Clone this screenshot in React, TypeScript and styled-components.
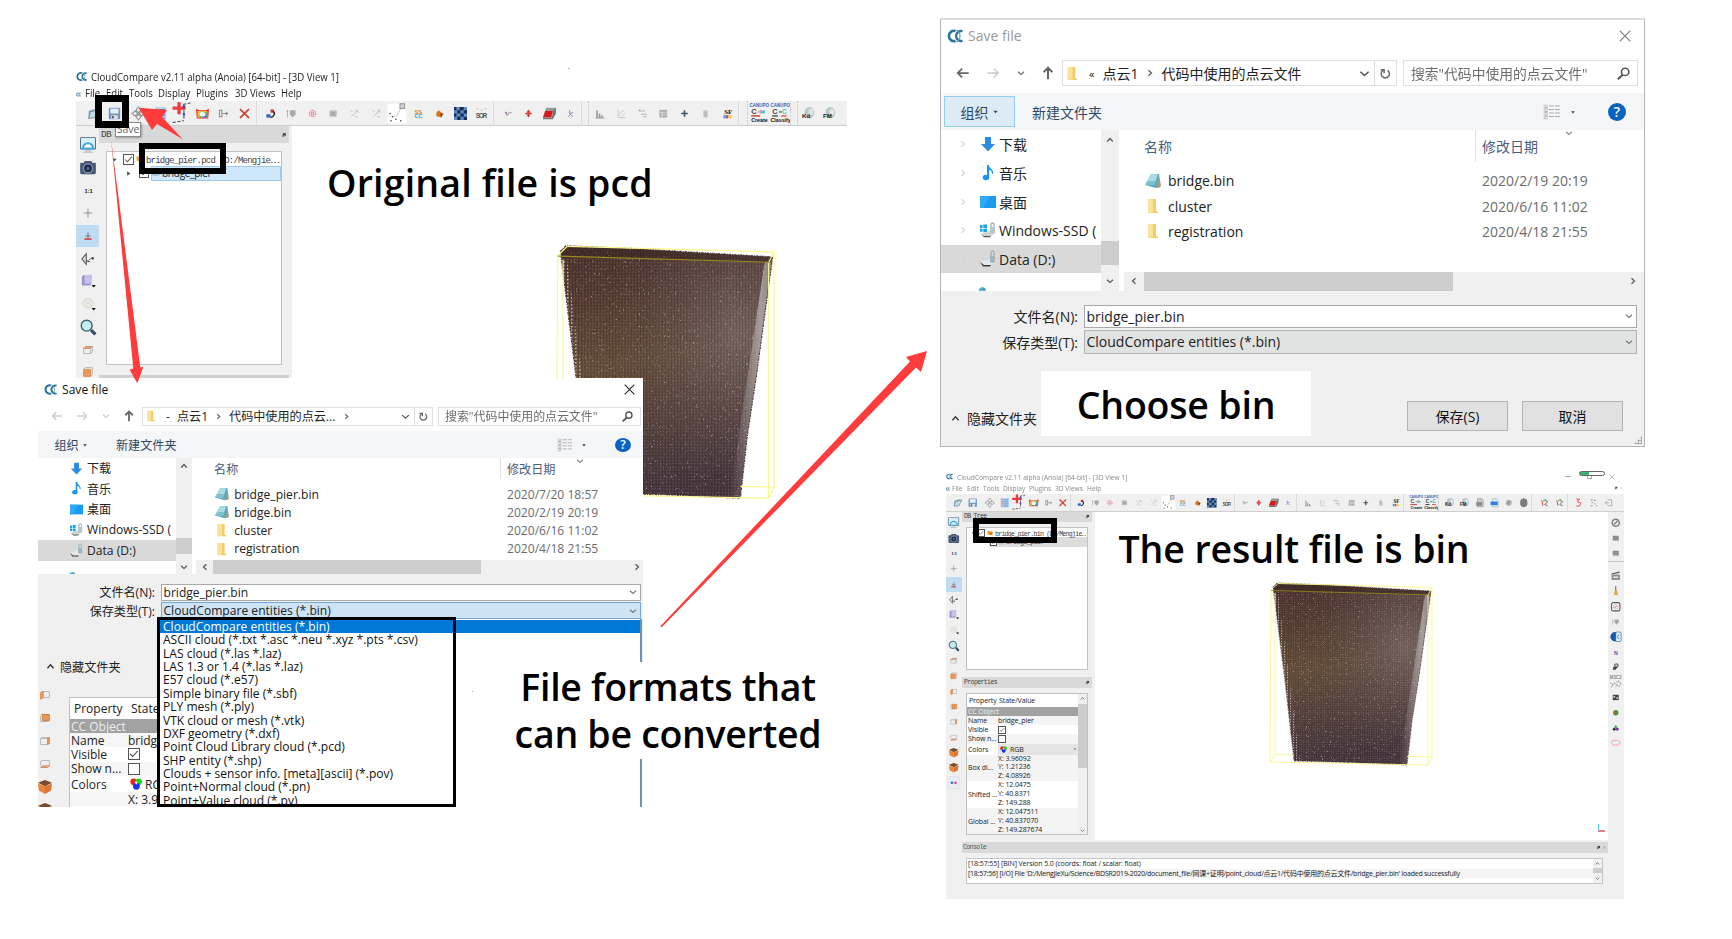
import React, { useId } from "react";
import styled, { createGlobalStyle, css, ThemeProvider } from "styled-components";

const UI = `"Open Sans", "Noto Sans CJK SC", sans-serif`;
const FIXED = `"Liberation Mono", "Noto Sans CJK SC", monospace`;

const GlobalStyle = createGlobalStyle`
  * { box-sizing: border-box; }
  body { margin: 0; background: #fff; font-family: ${UI}; color: #000; }
`;

/* ---------------------------------------------------------------- canvas */

const Board = styled.main`
  position: relative;
  width: 1732px;
  height: 939px;
  overflow: hidden;
  background: #fff;
`;

type Place = { $x: number; $y: number; $w?: number; $h?: number };

const placed = css<Place>`
  position: absolute;
  left: ${(p) => p.$x}px;
  top: ${(p) => p.$y}px;
  ${(p) => p.$w !== undefined && `width: ${p.$w}px;`}
  ${(p) => p.$h !== undefined && `height: ${p.$h}px;`}
`;

const Item = styled.section<Place>`
  ${placed}
  overflow: hidden;
`;

const Frame = styled.div<Place & { $b: number }>`
  ${placed}
  border: ${(p) => p.$b}px solid #000;
`;

const Caption = styled.div<Place & { $ls?: number }>`
  ${placed}
  display: flex;
  align-items: center;
  justify-content: center;
  text-align: center;
  white-space: pre;
  background: #fff;
  font-size: 37.5px;
  line-height: 47px;
  font-weight: 560;
  letter-spacing: ${(p) => p.$ls ?? 0}px;
`;

const ChooseBox = styled(Caption)`
  padding-top: 2px;
`;

const Speck = styled.i<Place>`
  ${placed}
  background: #b5b5b5;
`;

const Overlay = styled.svg`
  position: absolute;
  inset: 0;
  pointer-events: none;
`;

const Squeeze = styled.span<{ $k: number }>`
  display: inline-block;
  white-space: nowrap;
  transform: scaleX(${(p) => p.$k});
  transform-origin: left center;
`;

/* ----------------------------------------------------------------- icons */

const Svg = styled.svg<{ $s: number }>`
  flex: none;
  width: ${(p) => p.$s}px;
  height: ${(p) => p.$s}px;
  overflow: visible;
`;

const tinyText = { fontFamily: "Liberation Sans", fontWeight: 700 } as const;

const drawings: Record<string, React.ReactNode> = {
  logo: (
    <g fill="none" stroke="#2f7396">
      <path d="M8.500 3A5.200 5.200 0 1 0 8.500 13" strokeWidth="2.600" />
      <path d="M15.500 3.200A5 5 0 1 0 15.500 12.800" strokeWidth="2.400" />
      <path d="M9 2a6.500 6.500 0 0 1 0 12" stroke="#5aa3c4" strokeWidth="1.200" />
    </g>
  ),
  open: (
    <g>
      <path d="M2 5l5-2 6-1-3 10-8 2z" fill="#8ba9ba" />
      <path d="M4 6l11-3-5 10-8 1z" fill="#c2dce8" stroke="#5c7b8b" />
    </g>
  ),
  save: (
    <g>
      <rect x="1" y="1" width="14" height="14" rx="1.5" fill="#7295c0" />
      <rect x="3" y="2" width="10" height="6" fill="#e5f0fa" />
      <rect x="4" y="10" width="8" height="5" fill="#d8dee4" />
      <rect x="5" y="11" width="2" height="3" fill="#456" />
    </g>
  ),
  pick: (
    <g fill="none" stroke="#949494" strokeWidth="1.3">
      <path d="M8 0l3 4-3 3-3-3zM8 16l3-4-3-3-3 3zM0 8l4-3 3 3-3 3zM16 8l-4-3-3 3 3 3z" />
    </g>
  ),
  list: (
    <g>
      <rect x="1" y="0" width="14" height="16" fill="#b9d7f3" />
      <g stroke="#4c7fc0" strokeWidth="1.3">
        <path d="M6 3h8M6 6.500h8M6 10h8M6 13.500h8" />
      </g>
      <g fill="#dc6045">
        <path d="M2.500 2h2v2h-2zM2.500 5.500h2v2h-2zM2.500 9h2v2h-2zM2.500 12.500h2v2h-2z" />
      </g>
    </g>
  ),
  align: (
    <g>
      <path d="M5-6v15M-3 1.500h16" stroke="#ee3b3b" strokeWidth="4" />
      <path d="M-3 19l14-2M11-2v18M10-3l9-2" stroke="#444" strokeDasharray="4 2" strokeWidth="1.3" fill="none" />
      <circle cx="11" cy="-1" r="1.500" fill="#3d47c5" />
      <circle cx="11" cy="9" r="1.500" fill="#3d47c5" />
    </g>
  ),
  colors: (
    <g>
      <path d="M0 2l4 2h8l4-2-1 12H1z" fill="#e33" />
      <path d="M2 5h12v8H2z" fill="#f8c42e" />
      <path d="M4 6h9v6H4z" fill="#47c558" />
      <path d="M6 8h7v5H6z" fill="#2e76e6" />
      <path d="M4 7l3-1 4 1 1 3-3 2-4-1z" fill="#fff" />
    </g>
  ),
  export: (
    <g fill="none" stroke="#8c8c8c" strokeWidth="1.300">
      <path d="M3 4h3v8H3zM7 8h6M11 6l2 2-2 2" />
    </g>
  ),
  remove: <path d="M2.500 2.500l11 11M13.500 2.500l-11 11" stroke="#cf4535" strokeWidth="2.200" />,
  merge: (
    <g>
      <path d="M3 9h5v4H3z" fill="#2a5fd0" />
      <path d="M8 3h4v4H8z" fill="#e13030" />
      <path d="M11 5c3 2 2 7-3 8" fill="none" stroke="#333" strokeWidth="2" />
    </g>
  ),
  shield: (
    <g fill="#a8a8a8">
      <path d="M6 4h7v5l-3.500 4L6 9z" />
      <path d="M2.500 6h1v7h-1zM1.500 6L3 3.500 4.500 6z" />
    </g>
  ),
  flower: (
    <g fill="none" stroke="#df8290" strokeWidth="1.300">
      <circle cx="8" cy="8" r="4" strokeDasharray="2 1" />
      <circle cx="8" cy="8" r="1.800" />
    </g>
  ),
  grayBox: (
    <g>
      <rect x="3" y="4" width="9" height="8" rx="1" fill="#bdbdbd" />
      <path d="M5 7h5M5 9.500h5" stroke="#929292" />
    </g>
  ),
  diag: (
    <g stroke="#c2c2c2" fill="none" strokeWidth="1.200">
      <path d="M4 12l7-7M9 4h3v3M3 4l3 2M9 12h3" />
    </g>
  ),
  segment: (
    <g>
      <rect x="-4" y="-4" width="23" height="24" fill="#fff" />
      <path d="M6 12l7-12" stroke="#9a9a9a" strokeDasharray="2 1" />
      <rect x="11" y="-4" width="6" height="6" fill="#d0d0d0" stroke="#888" />
      <g fill="#444">
        <circle cx="-1" cy="8" r="1" />
        <circle cx="2" cy="12" r="1" />
        <circle cx="6" cy="15" r="1" />
        <circle cx="0" cy="17" r="1" />
        <circle cx="12" cy="17" r="1" />
      </g>
    </g>
  ),
  cc: (
    <g fontSize="7" style={tinyText}>
      <text x="3" y="8" fill="#dd7b3a">SS</text>
      <text x="3" y="13.500" fill="#38a3c9">CC</text>
    </g>
  ),
  orange: (
    <g>
      <path d="M4 11V7l3-3 5 4-2 5z" fill="#d8761e" />
      <path d="M9 8l4 0-3 5z" fill="#7c3c10" />
    </g>
  ),
  check: (
    <g>
      <rect x="0" y="0" width="16" height="16" fill="#1b2d4c" />
      <path d="M3 0h4v4H3zM12 0h4v4h-4zM0 4h4v4H0zM8 4h4v4H8zM3 8h5v4H3zM12 8h4v4h-4zM0 12h4v4H0zM8 12h4v4H8z" fill="#5f8cc8" />
    </g>
  ),
  sor: (
    <g>
      <g fill="#e0a08a">
        <circle cx="3" cy="2" r=".9" />
        <circle cx="8" cy="4" r=".9" />
        <circle cx="13" cy="2" r=".9" />
      </g>
      <text x="1" y="13.500" fontSize="8" textLength="14" fill="#555" style={tinyText}>SOR</text>
    </g>
  ),
  curve: (
    <g>
      <path d="M5 6l2.500 4.500L10 7h3" fill="none" stroke="#888" strokeWidth="1.100" />
      <circle cx="6.500" cy="7" r="1.100" fill="#b55ab5" />
    </g>
  ),
  move: (
    <g fill="#d83434">
      <path d="M7.300 4h1.400v8H7.300zM4 7.300h8v1.400H4z" />
      <path d="M8 3l3 4H5zM8 13l3-4H5z" opacity=".8" />
    </g>
  ),
  slab: (
    <g>
      <path d="M4 1h12l-3 11H0z" fill="#999" />
      <path d="M3 5h9l-2 8H0z" fill="#dc1717" />
      <path d="M13 4l3-3v7l-4 7H0v-2h11z" fill="#777" />
    </g>
  ),
  axes: (
    <g fill="none" stroke="#7a74c8" strokeWidth="1.100">
      <path d="M7 4v4l4 4M7 8l4-1" />
      <path d="M5 12l3-3" stroke="#888" />
    </g>
  ),
  bars: (
    <g fill="#9b9b9b">
      <path d="M4 4h2v9H4zM7 8h2v5H7zM10 10h2v3h-2zM3 13h11v1H3z" />
    </g>
  ),
  angle: <path d="M4 3v10h9M5 9l6-5M9 11l3-3" fill="none" stroke="#c8c8c8" strokeWidth="1.200" />,
  swap: (
    <g fill="none" stroke="#b0b0b0" strokeWidth="1.300">
      <path d="M3 5h8M6 9h7M3 5l2-2M9 12h4" />
    </g>
  ),
  table: (
    <g>
      <rect x="3" y="3.500" width="9.500" height="9.500" fill="#acacac" />
      <path d="M3 6.500h9.500M6 6v7M6 9.500h6.500" stroke="#eee" strokeWidth=".8" />
    </g>
  ),
  plus: <path d="M8 4v8M4 8h8" stroke="#3e5463" strokeWidth="2" />,
  trash: (
    <g>
      <rect x="5.500" y="4" width="5" height="9" fill="#c5c5c5" />
      <path d="M5.500 7h5M5.500 10h5" stroke="#b0b0b0" />
    </g>
  ),
  sf: (
    <g>
      <text x="4" y="8" fontSize="8.500" fill="#222" style={{ ...tinyText, fontFamily: "Liberation Serif" }}>SF</text>
      <path d="M3 10h3v4H3z" fill="#26b5e0" />
      <path d="M6 10h3v4H6z" fill="#e635b4" />
      <path d="M9 10h4v4H9z" fill="#f0d32a" />
    </g>
  ),
  canupo1: (
    <g style={tinyText}>
      <text x="-3" y="0" fontSize="5.500" fill="#3a62bb">CANUPO</text>
      <text x="-1" y="9" fontSize="9" fill="#444">C</text>
      <path d="M7 6h4M10 4l3 2-3 2" stroke="#d44" fill="none" />
      <path d="M-1 11h11" stroke="#c55" strokeWidth="2" />
      <circle cx="14" cy="6" r="2" fill="#3cc2d8" />
      <text x="-1" y="18" fontSize="6.500" fill="#111">Create</text>
    </g>
  ),
  canupo2: (
    <g style={tinyText}>
      <text x="-3" y="0" fontSize="5.500" fill="#3a62bb">CANUPO</text>
      <text x="-1" y="9" fontSize="9" fill="#444">C</text>
      <path d="M7 6h4" stroke="#4a4" strokeWidth="2" />
      <text x="11" y="9" fontSize="8" fill="#3cc2d8">C</text>
      <path d="M-1 11h7" stroke="#333" strokeWidth="1.500" />
      <path d="M10 11h7" stroke="#d44" strokeWidth="1.500" />
      <text x="-3" y="18" fontSize="6.500" fill="#111">Classify</text>
    </g>
  ),
  kd: (
    <g>
      <ellipse cx="9" cy="7" rx="6" ry="7" fill="#b9c5c8" />
      <ellipse cx="11" cy="6" rx="3" ry="4" fill="#dfe7e8" />
      <text x="0" y="14" fontSize="7.500" fill="#222" style={tinyText}>Kd</text>
    </g>
  ),
  fm: (
    <g>
      <ellipse cx="9" cy="7" rx="6" ry="7" fill="#b9c5c8" />
      <ellipse cx="11" cy="6" rx="3" ry="4" fill="#dfe7e8" />
      <text x="0" y="14" fontSize="7.500" fill="#222" style={tinyText}>FM</text>
    </g>
  ),
  csv: (
    <g>
      <path d="M4 1h7l3 3v11H4z" fill="#c8c8c8" stroke="#999" />
      <path d="M2 7h10v6H2z" fill="#8b8b8b" />
    </g>
  ),
  blueDoc: (
    <g>
      <path d="M4 1h7l3 3v11H4z" fill="#dce8f6" stroke="#9bb4d0" />
      <path d="M1 6h12v6H1z" fill="#2f7fe0" />
    </g>
  ),
  ball: (
    <g>
      <circle cx="8" cy="8" r="5" fill="#b4b4b4" />
      <path d="M4 10l8-4M8 3v10" stroke="#888" />
    </g>
  ),
  globe: (
    <g>
      <ellipse cx="8" cy="8" rx="6.500" ry="7.500" fill="#8d8d8d" />
      <path d="M8 1v14M4 3q3 5 0 10M12 3q-3 5 0 10" stroke="#555" fill="none" />
    </g>
  ),
  rgb: (
    <g>
      <path d="M3 4l2 9" stroke="#d33" strokeWidth="1.500" />
      <path d="M8 4l5 2-5 5 5 2" stroke="#666" strokeWidth="1.500" fill="none" />
      <path d="M5 5l5-3" stroke="#4a4" strokeWidth="1.500" />
    </g>
  ),
  redCurve: <path d="M4 2h6l-5 4 6 2-1 5-6 1" fill="none" stroke="#e55058" strokeWidth="1.600" />,
  dots: (
    <g fill="#999">
      <path d="M3 2h3v2H3zM8 3h3v2H8zM4 7h3v2H4zM3 12h3v2H3zM9 9h2v2H9zM12 12h2v2h-2z" />
    </g>
  ),
  exit: <path d="M6 3h7v10H6M2 8h7M5 5L2 8l3 3" fill="none" stroke="#aaa" strokeWidth="1.500" />,
  screen: (
    <g>
      <rect x="-1" y="-1" width="18" height="14" rx="1" fill="#3d6078" />
      <rect x="0" y="0" width="16" height="12" fill="#d7effb" />
      <path d="M2 12a6 6 0 0 1 12 0z" fill="#fff" stroke="#4aa8de" strokeWidth="2.400" />
      <path d="M5 14h6l3 3H2z" fill="#c5c9cb" />
    </g>
  ),
  camera: (
    <g>
      <rect x="-1" y="2" width="18" height="13" rx="1.500" fill="#4c5b78" />
      <path d="M4 0h8l1 3H3z" fill="#4c5b78" />
      <circle cx="8" cy="8.500" r="5" fill="#1c2740" stroke="#8f9db5" strokeWidth="1.200" />
      <circle cx="8" cy="8.500" r="2" fill="#4a6395" />
    </g>
  ),
  one: <text x="4" y="10.500" fontSize="6.500" fill="#222" style={tinyText}>1:1</text>,
  cross: <path d="M8 3v10M3 8h10" stroke="#999" strokeWidth="1.300" />,
  pivot: (
    <g>
      <path d="M8 4v7M5 8h6" stroke="#777" strokeWidth="1.200" />
      <path d="M4 11.500h8" stroke="#de4448" strokeWidth="2" />
    </g>
  ),
  view: (
    <g>
      <path d="M6 2v12L1 8z" fill="#ddd" stroke="#555" strokeWidth="1.200" />
      <path d="M6 10l4 1" stroke="#444" strokeWidth="1.200" />
      <path d="M9 9l3-2" stroke="#666" />
      <path d="M12 6h2.500v2.500H12z" fill="#333" />
    </g>
  ),
  cube: (
    <g>
      <path d="M1 3l2-2h9v10l-2 2H1z" fill="#9793cf" />
      <path d="M4 1h8v10H4z" fill="#c4c2e8" />
      <path d="M12 12.500h5l-2.500 3z" fill="#111" />
    </g>
  ),
  target: (
    <g>
      <circle cx="8" cy="7" r="5.500" fill="none" stroke="#d5e0d3" strokeWidth="1.500" />
      <circle cx="8" cy="7" r="3" fill="none" stroke="#e8dccf" strokeWidth="1.300" />
      <circle cx="8" cy="7" r="1.200" fill="#b6dede" />
      <path d="M12 12.500h5l-2.500 3z" fill="#111" />
    </g>
  ),
  lens: (
    <g>
      <circle cx="6.500" cy="6.500" r="6.200" fill="#c2edf3" stroke="#42606d" strokeWidth="1.600" />
      <path d="M11.500 11.500l5 5" stroke="#2a4d66" strokeWidth="3.500" />
    </g>
  ),
  boxTop: (
    <g fill="none" stroke="#b0b0b0">
      <path d="M3 6h8v6H3zM5 4h8v6l-2 2" />
      <path d="M3 6l2-2h8l-2 2z" fill="#eab08b" stroke="#c98a62" />
    </g>
  ),
  boxFront: (
    <g fill="none" stroke="#b0b0b0">
      <path d="M3 5l2-2h8v8l-2 2" />
      <path d="M3 5h8v8H3z" fill="#ed9858" stroke="#d78a50" />
    </g>
  ),
  boxLeft: (
    <g fill="none" stroke="#b0b0b0">
      <path d="M5 4h8v7H5z" />
      <path d="M3 5l3-1v7l-3 2z" fill="#ed9858" stroke="#d78a50" />
    </g>
  ),
  boxBack: (
    <g fill="none" stroke="#b0b0b0">
      <path d="M3 5l2-2M3 5v7h8l2-1" />
      <path d="M5 4h8v7H5z" fill="#e59658" stroke="#cf7836" />
    </g>
  ),
  boxRight: (
    <g fill="none" stroke="#b0b0b0">
      <path d="M3 5h8v7H3zM3 5l2-1h8" />
      <path d="M11 5l2-1v7l-2 1z" fill="#ed9858" stroke="#d78a50" />
    </g>
  ),
  boxBottom: (
    <g fill="none" stroke="#b0b0b0">
      <path d="M3 10V5l2-1h8v6" />
      <path d="M3 12l2-2h8l-2 2z" fill="#eab08b" stroke="#c98a62" />
    </g>
  ),
  isoFront: (
    <g>
      <path d="M0 3l8-3 8 3-8 4z" fill="#7a4a2c" />
      <path d="M0 4l8 3v9l-7-4z" fill="#e8843c" />
      <path d="M16 4L8 7v9l7-4z" fill="#d87834" />
    </g>
  ),
  stereo: (
    <g>
      <rect x="-2" y="-2" width="20" height="20" rx="2" fill="#e9edf3" stroke="#d4dbe4" />
      <circle cx="5" cy="8" r="2.200" fill="#2c62c8" />
      <circle cx="11" cy="8" r="2.200" fill="#e23a78" />
    </g>
  ),
  noEntry: (
    <g fill="none" stroke="#7d7d7d" strokeWidth="2.500">
      <circle cx="8" cy="8" r="6" />
      <path d="M5 11l6-6" />
    </g>
  ),
  plate: (
    <g>
      <path d="M3 3h10v8H3z" fill="#848484" />
      <path d="M3 6h10M3 9h10M10 11l3 2" stroke="#aaa" />
    </g>
  ),
  clap: (
    <g>
      <path d="M1 6h14v9H1z" fill="#8c8c8c" />
      <path d="M1 4l13-3 1 2-14 3z" fill="#555" />
      <path d="M4 9h8v3H4z" fill="#ddd" />
    </g>
  ),
  broom: (
    <g>
      <path d="M8 0v8" stroke="#6d4a2a" strokeWidth="1.500" />
      <path d="M6 7h4l2 8H5z" fill="#e0a550" />
    </g>
  ),
  compass: (
    <g>
      <rect x="1" y="1" width="14" height="14" rx="3" fill="#fff" stroke="#555" strokeWidth="1.800" />
      <circle cx="8" cy="8" r="4" fill="#fff" stroke="#999" />
      <path d="M6 10l4-4" stroke="#d33" strokeWidth="1.500" />
    </g>
  ),
  ccBlue: (
    <g>
      <circle cx="7" cy="8" r="8" fill="#1558a6" />
      <rect x="8" y="0" width="9" height="16" rx="2" fill="#eaf2fb" stroke="#1558a6" />
      <path d="M14 5a3 3 0 1 0 0 6" fill="none" stroke="#2c78cc" strokeWidth="1.500" />
    </g>
  ),
  normal: <text x="5" y="13" fontSize="9" fill="#5b57c2" style={tinyText}>N</text>,
  poisson: (
    <g>
      <circle cx="9" cy="6" r="4" fill="#777" />
      <path d="M4 8h7l-3 5H3z" fill="#444" />
      <circle cx="9" cy="6" r="1.500" fill="#ddd" />
    </g>
  ),
  m3c2: (
    <g>
      <text x="-2" y="2" fontSize="7.500" fill="#888" style={tinyText}>M3C2</text>
      <path d="M-1 8l5 3-4 5M5 8l6 4-4 3M12 5l5 4-4 6M9 7l4-2" stroke="#666" fill="none" strokeDasharray="2 1" strokeWidth="1.300" />
    </g>
  ),
  mosaic: (
    <g>
      <path d="M3 3h10v9H3z" fill="#444" />
      <path d="M4 5h3v3H4zM9 7h3v3H9z" fill="#c9c9c9" />
    </g>
  ),
  green: (
    <g>
      <circle cx="8" cy="8" r="4.500" fill="#4d8d3f" />
      <circle cx="6" cy="8" r="1.500" fill="#b5762b" />
    </g>
  ),
  triRgb: (
    <g>
      <path d="M8 3l3 5H5z" fill="#2aa63a" />
      <circle cx="5.500" cy="10.500" r="2.500" fill="#333" />
      <circle cx="10.500" cy="10.500" r="2.500" fill="#8533b5" />
    </g>
  ),
  ellipse: <ellipse cx="8" cy="8" rx="7" ry="4" fill="none" stroke="#ee98a2" strokeWidth="1.500" />,
  download: <path d="M5 1h6v7h4l-7 7.500L1 8h4z" fill="#2f8be0" />,
  music: (
    <g fill="#1697f0">
      <path d="M7 0h2c0 4 5 4 4 9h-1c0-3-1-4-3-4v7H7z" />
      <ellipse cx="6" cy="12.500" rx="3.300" ry="2.700" />
    </g>
  ),
  desktop: (
    <g>
      <rect x="0" y="2" width="16" height="12" fill="#1a9bf4" />
      <path d="M0 2h10L3 14H0z" fill="#31a9fb" />
    </g>
  ),
  winDrive: (
    <g>
      <path d="M0 3h2.500v3H0zM3.300 2.500H7v3.500H3.300zM0 6.800h2.500v3H0zM3.300 6.800H7v3.500H3.300z" fill="#18a3e8" />
      <path d="M1 12l8-3 7 1-5 4H4z" fill="#d0d4d7" />
      <path d="M1 12l3 2h7l-1 1.300H4z" fill="#555" />
      <path d="M11 7V2q2-2 3 0v5" fill="none" stroke="#a5b0b8" strokeWidth="1.300" />
      <path d="M10 5h5v6l-3 1-2-1z" fill="#b9c5cc" />
    </g>
  ),
  drive: (
    <g>
      <path d="M0 11l9-3 7 2-5 4H4z" fill="#e4e7e9" />
      <path d="M0 11l4 3h7l-1 1.500H3z" fill="#3d3d3d" />
      <path d="M11 7V1q2-2 3 0v5" fill="none" stroke="#a5b0b8" strokeWidth="1.300" />
      <path d="M10 5h5v6l-3 1-2-1z" fill="#a3b4be" />
    </g>
  ),
  notepad: (
    <g>
      <path d="M9 1l5 0 2 12-2 2-4-1z" fill="#b59a70" />
      <path d="M6 1h8l-1 13-2 1-11-3z" fill="#5fa9bd" />
      <path d="M6 1l7 .5L9 12l-9 0z" fill="#a9dbe6" />
      <path d="M3 8l7 0-1 4-9 0z" fill="#7fc0d0" />
    </g>
  ),
  folder: (
    <g>
      <path d="M3 1h8v12l2 1v1H3z" fill="#f2cd67" />
      <path d="M3 1h5v13l-5 1z" fill="#fbe29a" />
    </g>
  ),
  details: (
    <g>
      <rect x="0" y="1" width="3.500" height="14" fill="#ddd" stroke="#bbb" strokeWidth=".5" />
      <path d="M1 4h2M1 12h2" stroke="#78a3c9" />
      <path d="M1 8h2" stroke="#d77" />
      <path d="M5 2h5M11 2h5M5 5.500h5M11 5.500h5M5 9h5M11 9h5M5 12.500h5M11 12.500h5" stroke="#aaa" />
    </g>
  ),
  rgbDots: (
    <g>
      <circle cx="5" cy="5" r="4.500" fill="#f21d1d" />
      <circle cx="11.500" cy="5" r="4.500" fill="#18d81e" />
      <circle cx="8.500" cy="11" r="4.500" fill="#1735ee" />
      <path d="M6 5h4l-1.500 4z" fill="#fff" />
    </g>
  ),
  goldFolder: (
    <g>
      <path d="M1 2l7 2v10l-7-3z" fill="#f2a91b" />
      <path d="M6 4h9v9l-7 1z" fill="#d68512" />
    </g>
  ),
  cloud: (
    <path d="M3 12a3 3 0 0 1 0-6 4.500 4.500 0 0 1 8-1 3.500 3.500 0 0 1 2 7z" fill="#cfe4f3" stroke="#5f8fb4" strokeWidth="1.500" />
  ),
  netDrive: (
    <g>
      <path d="M1 10a4 4 0 0 1 8 0z" fill="#3a9cc4" />
      <path d="M2 10a4 4 0 0 1 3-3" stroke="#7cc7df" fill="none" />
    </g>
  ),
  left: <path d="M14.500 8H2M7 3L2 8l5 5" fill="none" stroke="currentColor" strokeWidth="2" />,
  right: <path d="M1.500 8H14M9 3l5 5-5 5" fill="none" stroke="currentColor" strokeWidth="2" />,
  up: <path d="M8 15V2M3 7l5-5 5 5" fill="none" stroke="currentColor" strokeWidth="2.400" />,
  down: <path d="M2 5.500l6 5.500 6-5.500" fill="none" stroke="currentColor" strokeWidth="2.200" />,
  upChev: <path d="M2.500 11l5.500-6 5.500 6" fill="none" stroke="currentColor" strokeWidth="2.400" />,
  leftChev: <path d="M11 2.500l-6 5.500 6 5.500" fill="none" stroke="currentColor" strokeWidth="2.400" />,
  rightChev: <path d="M5 2.500l6 5.500-6 5.500" fill="none" stroke="currentColor" strokeWidth="2.400" />,
  close: <path d="M1 1l14 14M15 1L1 15" fill="none" stroke="currentColor" strokeWidth="1.500" />,
  search: (
    <g fill="none" stroke="currentColor" strokeWidth="2">
      <circle cx="10" cy="6" r="4.500" />
      <path d="M7 9.500L1 15" strokeWidth="2.600" />
    </g>
  ),
  refresh: (
    <g fill="none" stroke="currentColor" strokeWidth="2.200">
      <path d="M11 3.500A6 6 0 1 1 4.500 3.500" />
      <path d="M1 2.500h5v5" />
    </g>
  ),
  pin: (
    <g>
      <path d="M5 3h8v7H5z" fill="#444" />
      <path d="M3 7h6v6H3z" fill="#777" />
    </g>
  ),
  tri: <path d="M3 6h10l-5 6z" fill="currentColor" />,
  triSide: <path d="M5 3l7 5-7 5z" fill="currentColor" />,
};

const Icon = ({ name, size = 14, color }: { name: string; size?: number; color?: string }) => (
  <Svg viewBox="0 0 16 16" $s={size} color={color}>
    {drawings[name]}
  </Svg>
);

/* ------------------------------------------------------ cloud application */

type Cell = string | number;

const toolbarMain: Cell[] = [
  "open", "save", 3, "pick", "list", "align", "colors", "export", "remove", 4,
  "merge", "shield", "flower", "grayBox", "diag", "diag", "segment", "cc", "orange", "check", "sor", 4,
  "curve", "move", "slab", "axes", 8,
  "bars", "angle", "swap", "table", "plus", "trash", "sf", 10,
  "canupo1", "canupo2", 8, "kd", "fm",
];
const toolbarExtra: Cell[] = ["csv", "blueDoc", "ball", "globe", 6, "rgb", "rgb", 5, "redCurve", "dots", "exit"];
const viewTools = ["screen", "camera", "one", "cross", "pivot", "view", "cube", "target", "lens", "boxTop", "boxFront"];
const boxTools = ["boxLeft", "boxBack", "boxRight", "boxBottom", "isoFront", "isoFront", "stereo"];
const pluginTools = [
  "clap", "broom", "compass", "shield", "ccBlue", "normal", "poisson", "m3c2", "mosaic", "green", "triRgb", "ellipse",
];

const AppTitle = styled.header<{ $h: number; $fs: number; $color: string }>`
  display: flex;
  flex: none;
  align-items: center;
  gap: 4px;
  height: ${(p) => p.$h}px;
  font-size: ${(p) => p.$fs}px;
  color: ${(p) => p.$color};
  white-space: nowrap;
`;

const MenuBar = styled.nav<{ $h: number; $fs: number; $color: string }>`
  display: flex;
  flex: none;
  align-items: center;
  height: ${(p) => p.$h}px;
  font-size: ${(p) => p.$fs}px;
  color: ${(p) => p.$color};
  white-space: nowrap;
`;

const ToolStrip = styled.div<{ $h: number; $pad: number }>`
  display: flex;
  align-items: center;
  flex: none;
  height: ${(p) => p.$h}px;
  padding-left: ${(p) => p.$pad}px;
  background: #f0f0f0;
  border-bottom: 1px solid #cfcfcf;
`;

const Slot = styled.span<{ $w: number }>`
  display: flex;
  flex: none;
  align-items: center;
  justify-content: center;
  width: ${(p) => p.$w}px;
`;

const Divider = styled.span<{ $w: number }>`
  flex: none;
  align-self: stretch;
  width: ${(p) => p.$w}px;
  border-left: ${(p) => (p.$w > 3 ? "1px solid #dcdcdc" : "none")};
  border-right: ${(p) => (p.$w > 6 ? "1px dotted #c4c4c4" : "none")};
`;

const Strip = ({ cells, slot, size }: { cells: Cell[]; slot: number; size: number }) => (
  <>
    {cells.map((c, i) =>
      typeof c === "number" ? (
        <Divider key={i} $w={c} />
      ) : (
        <Slot key={i} $w={slot}>
          <Icon name={c} size={size} />
        </Slot>
      )
    )}
  </>
);

const SideBar = styled.aside<{ $w: number; $pt: number; $mt?: number }>`
  display: flex;
  flex-direction: column;
  flex: none;
  width: ${(p) => p.$w}px;
  margin-top: ${(p) => p.$mt ?? 0}px;
  padding-top: ${(p) => p.$pt}px;
  background: #f0f0f0;
  overflow: hidden;
`;

const SideSlot = styled.span<{ $h: number; $on?: boolean }>`
  display: flex;
  flex: none;
  align-items: center;
  justify-content: center;
  height: ${(p) => p.$h}px;
  background: ${(p) => (p.$on ? "#bfdcf3" : "transparent")};
`;

const Side = ({ names, step, size }: { names: string[]; step: number; size: number }) => (
  <>
    {names.map((n, i) => (
      <SideSlot key={i} $h={step} $on={n === "pivot"}>
        <Icon name={n} size={size} />
      </SideSlot>
    ))}
  </>
);

const Row = styled.div`
  display: flex;
  min-width: 0;
  min-height: 0;
  flex: 1;
`;

const Dock = styled.div<{ $w: number }>`
  display: flex;
  flex-direction: column;
  flex: none;
  width: ${(p) => p.$w}px;
  background: #f0f0f0;
`;

const DockTitle = styled.div<{ $h: number; $fs: number; $k?: number }>`
  display: flex;
  flex: none;
  align-items: center;
  justify-content: space-between;
  height: ${(p) => p.$h}px;
  margin-right: 3px;
  padding: 0 2px;
  background: #d9d9d9;
  color: #444;
  font: ${(p) => p.$fs}px ${FIXED};
  letter-spacing: ${(p) => p.$k ?? -0.6}px;
`;

const Sunken = styled.div<{ $m: string; $h: number }>`
  flex: none;
  height: ${(p) => p.$h}px;
  margin: ${(p) => p.$m};
  background: #fff;
  border: 1px solid #bfc2c5;
  overflow: hidden;
`;

const TreeRow = styled.div<{ $h: number; $pl: number; $fs: number; $ls: number; $sel?: string }>`
  display: flex;
  align-items: center;
  gap: 2px;
  height: ${(p) => p.$h}px;
  margin-left: ${(p) => p.$pl}px;
  padding-left: 1px;
  font: ${(p) => p.$fs}px ${FIXED};
  letter-spacing: ${(p) => p.$ls}px;
  color: #444;
  white-space: nowrap;
  background: ${(p) => p.$sel ?? "transparent"};
`;

const SelectedName = styled.span`
  display: flex;
  flex: 1;
  align-items: center;
  gap: 2px;
  height: 15px;
  background: #cde8fd;
  border: 1px solid #9fc9ea;
  font-family: ${UI};
  font-size: 10px;
  letter-spacing: -0.3px;
  color: #222;
`;

const Tick = styled.span<{ $s: number }>`
  flex: none;
  display: flex;
  width: ${(p) => p.$s}px;
  height: ${(p) => p.$s}px;
  border: 1px solid #555;
  background: #fff;
`;

const TickBox = ({ size, on }: { size: number; on?: boolean }) => (
  <Tick $s={size}>
    {on && (
      <Svg viewBox="0 0 16 16" $s={size - 2}>
        <path d="M2 8l4 4 8-9" fill="none" stroke="#555" strokeWidth="1.800" />
      </Svg>
    )}
  </Tick>
);

const Tooltip = styled.div<Place>`
  ${placed}
  display: flex;
  align-items: flex-end;
  justify-content: center;
  background: #fff;
  border: 1px solid #8c8c8c;
  box-shadow: 1px 1px 2px rgba(0, 0, 0, 0.3);
  color: #666;
  font-size: 10.5px;
  line-height: 13px;
`;

const NextDock = styled.div`
  margin: 10px 3px 0 0;
  height: 4px;
  background: #cfcfcf;
`;

const Viewport = styled.div`
  flex: 1;
  background: #fff;
`;

const MenuItem = styled.span<{ $w: number }>`
  width: ${(p) => p.$w}px;
`;

const SourceFlow = styled.div`
  display: flex;
  flex-direction: column;
  height: 100%;
`;

const menus = ["File", "Edit", "Tools", "Display", "Plugins", "3D Views", "Help"];
const titleText = "CloudCompare v2.11 alpha (Anoia) [64-bit] - [3D View 1]";

const SourceWindow = () => (
  <Item $x={76} $y={68} $w={771} $h={310}>
    <SourceFlow>
      <AppTitle $h={16} $fs={11.2} $color="#222">
        <Icon name="logo" size={11} />
        <Squeeze $k={0.86}>{titleText}</Squeeze>
      </AppTitle>
      <MenuBar $h={17} $fs={11} $color="#222">
        <MenuItem $w={9}>
          <Icon name="logo" size={5} />
        </MenuItem>
        {menus.map((m, i) => (
          <MenuItem key={m} $w={[21, 23, 29, 38, 39, 46, 30][i]}>
            <Squeeze $k={0.87}>{m}</Squeeze>
          </MenuItem>
        ))}
      </MenuBar>
      <ToolStrip $h={25} $pad={7}>
        <Strip cells={toolbarMain} slot={21.2} size={13} />
      </ToolStrip>
      <Row>
        <SideBar $w={23} $pt={8}>
          <Side names={viewTools} step={22.7} size={14} />
        </SideBar>
        <Dock $w={193}>
          <DockTitle $h={17} $fs={9.5}>
            DB Tree
            <Icon name="pin" size={6} />
          </DockTitle>
          <Sunken $m="8px 10px 0 7px" $h={214}>
            <TreeRow $h={14} $pl={3} $fs={9} $ls={-0.8}>
              <Icon name="tri" size={7} color="#444" />
              <Slot $w={1} />
              <TickBox size={11} on />
              <Icon name="goldFolder" size={8} />
              <span>bridge_pier.pcd (D:/Mengjie⋯</span>
            </TreeRow>
            <TreeRow $h={14} $pl={17} $fs={11} $ls={0}>
              <Icon name="triSide" size={7} color="#444" />
              <Slot $w={3} />
              <TickBox size={10} on />
              <SelectedName>
                <Icon name="cloud" size={8} />
                <span>bridge_pier</span>
              </SelectedName>
            </TreeRow>
          </Sunken>
          <NextDock />
        </Dock>
        <Viewport />
      </Row>
    </SourceFlow>
  </Item>
);

/* ------------------------------------------------------------- pier scan */

const PierSvg = styled.svg<Place>`
  ${placed}
`;

const Pier = ({ x, y, w, h }: { x: number; y: number; w: number; h: number }) => {
  const id = useId().replace(/[^a-zA-Z0-9]/g, "");
  const body = "4,6 8,2 60,4 110,7 162,10 150,95 143,140 138,184 80,181.500 25,180 16,100";
  return (
    <PierSvg $x={x} $y={y} $w={w} $h={h} viewBox="0 0 164 186" preserveAspectRatio="none">
      <defs>
        <linearGradient id={`${id}v`} x1="0" y1="0" x2="0.15" y2="1">
          <stop offset="0" stopColor="#4a2f2b" />
          <stop offset="0.2" stopColor="#533930" />
          <stop offset="0.5" stopColor="#654d37" />
          <stop offset="0.75" stopColor="#54403b" />
          <stop offset="1" stopColor="#45343c" />
        </linearGradient>
        <radialGradient id={`${id}r`} cx="0.85" cy="0.35" r="0.6">
          <stop offset="0" stopColor="#7a6a6c" stopOpacity="0.8" />
          <stop offset="1" stopColor="#5d4a4a" stopOpacity="0" />
        </radialGradient>
        <linearGradient id={`${id}e`} x1="0" x2="1">
          <stop offset="0" stopColor="#9b9092" stopOpacity="0" />
          <stop offset="0.7" stopColor="#b5aeaf" stopOpacity="0.8" />
          <stop offset="1" stopColor="#857a7c" stopOpacity="0.9" />
        </linearGradient>
        <pattern id={`${id}p`} width="2.300" height="2.300" patternUnits="userSpaceOnUse">
          <rect width=".8" height=".8" fill="#9a8c90" opacity=".4" />
          <rect x="1.200" width=".6" height="2.300" fill="#251614" opacity=".25" />
        </pattern>
        <pattern id={`${id}w`} width="3" height="2.600" patternUnits="userSpaceOnUse">
          <rect width="1" height="1" fill="#fff" />
        </pattern>
        <filter id={`${id}g`} x="0" y="0" width="1" height="1">
          <feTurbulence type="fractalNoise" baseFrequency="0.75 0.6" numOctaves="2" seed="7" />
          <feColorMatrix values="0 0 0 0 .68  0 0 0 0 .62  0 0 0 0 .6  5 0 0 0 -3.200" />
          <feComposite in2="SourceGraphic" operator="in" />
        </filter>
        <clipPath id={`${id}c`}>
          <polygon points={body} />
        </clipPath>
      </defs>
      <g clipPath={`url(#${id}c)`}>
        <polygon points={body} fill={`url(#${id}v)`} />
        <polygon points={body} fill={`url(#${id}r)`} />
        <polygon points={body} fill={`url(#${id}p)`} />
        <polygon points="3,12 9,12 31,180 24,180" fill={`url(#${id}w)`} opacity=".7" />
        <polygon points="156,14 163,12 139,184 130,182" fill={`url(#${id}e)`} />
        <polygon points={body} filter={`url(#${id}g)`} opacity=".55" />
        <polygon points="4,6 8,2 162,10 161,14 4,9" fill="#35211f" opacity=".5" />
      </g>
      <polygon points={body} fill="none" stroke="#4b3936" strokeWidth=".8" strokeDasharray="1.700 .9 .8 .7" />
      <g fill="none" stroke="#fbf88c" strokeWidth=".9">
        <path d="M9 2.500L163 6.500V176L138 175.500M25 174L6 173.500V12" />
        <path d="M159 14V184L1 181L2 9" />
        <path d="M2 9l7-6.500M159 14l4-7.500M159 184l4-8M1 181l5-7.500" />
      </g>
      <path d="M2 9.500L159 13.800" stroke="#9a8a1c" strokeWidth=".8" fill="none" />
    </PierSvg>
  );
};

/* ----------------------------------------------------------- save dialog */

interface Metrics {
  fs: number;
  title: number;
  titleColor: string;
  titleEnd: number;
  addr: number;
  bar: number;
  barPad: number;
  body: number;
  nav: number;
  navRow: number;
  navIcon: number;
  navGap: number;
  scroll: number;
  gap: number;
  head: number;
  fileRow: number;
  box: number;
  dateCol: number;
  label: number;
  input: number;
  formPad: number;
  inputGap: number;
  foot: number;
  right: number;
}

declare module "styled-components" {
  export interface DefaultTheme extends Metrics {}
}

const compact: Metrics = {
  fs: 12.1, title: 23, titleColor: "#111", titleEnd: 8, addr: 30, bar: 27, barPad: 8, body: 116, nav: 138,
  navRow: 20.5, navIcon: 13, navGap: 4, scroll: 16, gap: 4, head: 27, fileRow: 18.2, box: 19, dateCol: 143,
  label: 123, input: 17, formPad: 9.5, inputGap: 1.5, foot: 39, right: 2,
};

const roomy: Metrics = {
  fs: 14, title: 33, titleColor: "#999", titleEnd: 13, addr: 40, bar: 37, barPad: 3, body: 161, nav: 160,
  navRow: 28.7, navIcon: 16, navGap: 3, scroll: 18, gap: 5, head: 38, fileRow: 25.4, box: 26, dateCol: 169,
  label: 143, input: 23.5, formPad: 13.5, inputGap: 2, foot: 61, right: 7,
};

const Dialog = styled.section<Place & { $edge?: boolean }>`
  ${placed}
  display: flex;
  flex-direction: column;
  background: #fff;
  font-size: ${(p) => p.theme.fs}px;
  color: #222;
  white-space: nowrap;
  ${(p) => p.$edge && "border: 1px solid #b4b4b4; border-top: 2px solid #dedede;"}
`;

const DialogTitle = styled.header`
  display: flex;
  flex: none;
  align-items: center;
  height: ${(p) => p.theme.title}px;
  padding: 0 ${(p) => p.theme.titleEnd}px ${(p) => (p.theme.title > 30 ? 2 : 0)}px 6px;
  color: ${(p) => p.theme.titleColor};
`;

const DialogTitleText = styled.span`
  flex: 1;
  padding-left: 5px;
`;

const AddressRow = styled.div`
  display: flex;
  flex: none;
  align-items: center;
  height: ${(p) => p.theme.addr}px;
`;

const NavButtons = styled.div<{ $w: number }>`
  display: flex;
  align-items: center;
  justify-content: space-between;
  width: ${(p) => p.$w}px;
  margin-left: ${(p) => p.theme.fs + 1}px;
  margin-right: 7px;
`;

const Box = styled.div<{ $w: number; $color?: string }>`
  display: flex;
  flex: none;
  align-items: center;
  width: ${(p) => p.$w}px;
  height: ${(p) => p.theme.box}px;
  border: 1px solid #dfdfdf;
  color: ${(p) => p.$color ?? "#222"};
`;

const Crumb = styled.span<{ $ml: number; $fs?: number }>`
  display: flex;
  margin-left: ${(p) => p.$ml}px;
  ${(p) => p.$fs && `font-size: ${p.$fs}px;`}
`;

const Push = styled.span`
  flex: 1;
`;

const Refresh = styled.span<{ $w: number }>`
  display: flex;
  align-items: center;
  justify-content: center;
  align-self: stretch;
  width: ${(p) => p.$w}px;
  margin-left: 4px;
  border-left: 1px solid #dfdfdf;
`;

const CommandBar = styled.div`
  display: flex;
  flex: none;
  align-items: center;
  height: ${(p) => p.theme.bar}px;
  background: #f5f6f8;
  color: #2f4766;
`;

const Organize = styled.span<{ $on?: boolean; $w: number }>`
  display: flex;
  align-items: center;
  justify-content: center;
  gap: 3px;
  width: ${(p) => p.$w}px;
  height: ${(p) => p.theme.bar - 6}px;
  margin: 0 ${(p) => (p.$on ? 17 : 20)}px 0 ${(p) => p.theme.barPad}px;
  ${(p) => p.$on && "background: #dcebf5; border: 1px solid #93cdf0;"}
`;

const Help = styled.span<{ $s: number; $w: number }>`
  display: flex;
  align-items: center;
  justify-content: center;
  width: ${(p) => p.$w}px;
  height: ${(p) => p.$s}px;
  border-radius: 50%;
  background: #0a63c2;
  color: #fff;
  font-weight: 600;
`;

const Panes = styled.div`
  display: flex;
  flex: none;
  height: ${(p) => p.theme.body}px;
`;

const NavPane = styled.div`
  flex: none;
  width: ${(p) => p.theme.nav}px;
  overflow: hidden;
`;

const NavRow = styled.div<{ $sel?: boolean; $pl: number }>`
  display: flex;
  align-items: center;
  gap: ${(p) => p.theme.navGap}px;
  height: ${(p) => p.theme.navRow}px;
  padding-left: ${(p) => p.$pl}px;
  background: ${(p) => (p.$sel ? "#d9d9d9" : "transparent")};
`;

const NavTail = styled.div<{ $pl: number; $pt: number }>`
  display: flex;
  padding: ${(p) => p.$pt}px 0 0 ${(p) => p.$pl}px;
`;

const ChevronCell = styled.span`
  width: 18px;
  display: flex;
`;

const VScroll = styled.div`
  display: flex;
  flex: none;
  flex-direction: column;
  align-items: center;
  width: ${(p) => p.theme.scroll}px;
  padding: 4px 0 3px;
  background: #f0f0f0;
`;

const VScrollRoomy = styled(VScroll)`
  padding: 6px 0;
`;

const Thumb = styled.i<{ $h: number; $mt?: number; $mb?: number }>`
  flex: none;
  width: 100%;
  height: ${(p) => p.$h}px;
  margin-top: ${(p) => p.$mt ?? 0}px;
  margin-bottom: ${(p) => p.$mb ?? 0}px;
  background: #cdcdcd;
`;

const FilePane = styled.div`
  display: flex;
  flex-direction: column;
  flex: 1;
  margin-left: ${(p) => p.theme.gap}px;
`;

const FileHead = styled.div`
  display: flex;
  height: ${(p) => p.theme.head}px;
  color: #4a6080;
  > * {
    display: flex;
    align-items: center;
    height: ${(p) => p.theme.head - 6}px;
  }
`;

const NameHead = styled.span`
  flex: 1;
  padding-left: ${(p) => p.theme.fs + 6}px;
`;

const DateHead = styled.span`
  position: relative;
  width: ${(p) => p.theme.dateCol}px;
  padding-left: 6px;
  border-left: 1px solid #e3e3e3;
`;

const SortMark = styled.span`
  position: absolute;
  top: -1px;
  left: 53%;
  display: flex;
  color: #888;
`;

const FileRow = styled.div`
  display: flex;
  align-items: center;
  height: ${(p) => p.theme.fileRow}px;
  padding-left: ${(p) => p.theme.fs + 7}px;
`;

const FileName = styled.span`
  flex: 1;
  padding-left: ${(p) => p.theme.fs - 7}px;
`;

const FileDate = styled.span`
  width: ${(p) => p.theme.dateCol}px;
  padding-left: 7px;
  color: #6b6b6b;
`;

const HScroll = styled.div<{ $h: number }>`
  display: flex;
  align-items: center;
  justify-content: space-between;
  height: ${(p) => p.$h}px;
  margin-top: auto;
  background: #f0f0f0;
`;

const HThumb = styled.i<{ $w: number; $ml: number }>`
  align-self: stretch;
  width: ${(p) => p.$w}px;
  margin: 0 auto 0 ${(p) => p.$ml}px;
  background: #cdcdcd;
`;

const Form = styled.div`
  display: flex;
  flex: 1;
  flex-direction: column;
  gap: ${(p) => p.theme.inputGap}px;
  padding-top: ${(p) => p.theme.formPad}px;
  background: #f0f0f0;
`;

const Field = styled.label`
  display: flex;
  align-items: center;
  height: ${(p) => p.theme.input}px;
  padding-right: ${(p) => p.theme.right}px;
`;

const FieldLabel = styled.span`
  width: ${(p) => p.theme.label}px;
  padding-right: 6px;
  text-align: right;
`;

const FieldBox = styled.span<{ $bg: string; $line: string }>`
  display: flex;
  flex: 1;
  align-items: center;
  justify-content: space-between;
  align-self: stretch;
  padding: 0 3px 0 1.5px;
  background: ${(p) => p.$bg};
  border: 1px solid ${(p) => p.$line};
`;

const Foot = styled.footer<{ $pl: number }>`
  display: flex;
  align-items: center;
  height: ${(p) => p.theme.foot}px;
  margin-top: auto;
  padding-left: ${(p) => p.$pl}px;
  padding-right: 21px;
`;

const FolderToggle = styled.span<{ $gap: number; $pt: number }>`
  display: flex;
  align-items: center;
  gap: ${(p) => p.$gap}px;
  padding-top: ${(p) => p.$pt}px;
`;

const PushButton = styled.button`
  width: 101px;
  height: 30px;
  margin-left: 14px;
  padding: 0;
  border: 1px solid #b3b3b3;
  background: #e1e1e1;
  font: inherit;
  color: #111;
`;

const Grip = styled.i`
  position: absolute;
  right: 2px;
  bottom: 2px;
  width: 8px;
  height: 8px;
  background: radial-gradient(circle, #aaa 1px, transparent 1.2px) 0 0 / 3px 3px;
  clip-path: polygon(100% 0, 100% 100%, 0 100%);
`;

interface DialogProps {
  x: number;
  y: number;
  w: number;
  h: number;
  m: Metrics;
  path: string;
  files: [string, string, string][];
  big?: boolean;
}

const places: [string, string][] = [
  ["download", "下载"],
  ["music", "音乐"],
  ["desktop", "桌面"],
  ["winDrive", "Windows-SSD ("],
  ["drive", "Data (D:)"],
];

const SaveDialog = ({ x, y, w, h, m, path, files, big }: DialogProps) => {
  const Scroll = big ? VScrollRoomy : VScroll;
  return (
    <ThemeProvider theme={m}>
      <Dialog $x={x} $y={y} $w={w} $h={h} $edge={big}>
        <DialogTitle>
          <Icon name="logo" size={big ? 16 : 13} />
          <DialogTitleText>Save file</DialogTitleText>
          <Icon name="close" size={big ? 12 : 11} color={big ? "#888" : "#222"} />
        </DialogTitle>
        <AddressRow>
          <NavButtons $w={big ? 99 : 84}>
            <Icon name="left" size={big ? 14 : 12} color={big ? "#666" : "#ccc"} />
            <Icon name="right" size={big ? 14 : 12} color="#d0d0d0" />
            <Icon name="down" size={8} color={big ? "#666" : "#ccc"} />
            <Icon name="up" size={big ? 14 : 12} color="#666" />
          </NavButtons>
          <Box $w={big ? 335 : 291}>
            <Crumb $ml={2}>
              <Icon name="folder" size={big ? 15 : 12} />
            </Crumb>
            <Crumb $ml={big ? 9 : 9} $fs={big ? 11 : 12}>{big ? "«" : "-"}</Crumb>
            <Crumb $ml={big ? 8 : 7}>点云1</Crumb>
            <Crumb $ml={big ? 8 : 7}>
              <Icon name="rightChev" size={big ? 8 : 7} color="#555" />
            </Crumb>
            <Crumb $ml={7}>{path}</Crumb>
            {!big && (
              <Crumb $ml={8}>
                <Icon name="rightChev" size={7} color="#555" />
              </Crumb>
            )}
            <Push />
            <Icon name="down" size={big ? 11 : 9} color="#555" />
            <Refresh $w={big ? 22 : 18}>
              <Icon name="refresh" size={big ? 11 : 9} color="#666" />
            </Refresh>
          </Box>
          <Crumb $ml={big ? 6 : 5} />
          <Box $w={big ? 235 : 203} $color="#6d6d6d">
            <Crumb $ml={big ? 7 : 6}>
              <Squeeze $k={0.985}>搜索"代码中使用的点云文件"</Squeeze>
            </Crumb>
            <Push />
            <Icon name="search" size={big ? 13 : 11} color="#555" />
            <Crumb $ml={7} />
          </Box>
        </AddressRow>
        <CommandBar>
          <Organize $on={big} $w={big ? 71 : 50}>
            组织
            <Icon name="tri" size={big ? 7 : 6} color="#2f4766" />
          </Organize>
          新建文件夹
          <Push />
          <Icon name="details" size={big ? 16 : 14} />
          <Crumb $ml={big ? 10 : 9} />
          <Icon name="tri" size={6} color="#2f4766" />
          <Crumb $ml={big ? 32 : 28} />
          <Help $s={big ? 18 : 14} $w={big ? 18 : 16}>?</Help>
          <Crumb $ml={big ? 18 : 12} />
        </CommandBar>
        <Panes>
          <NavPane>
            {places.map(([icon, label]) => (
              <NavRow key={label} $sel={icon === "drive"} $pl={big ? 18 : 32}>
                {big && (
                  <ChevronCell>
                    <Icon name="rightChev" size={8} color="#d5d5d5" />
                  </ChevronCell>
                )}
                <Icon name={icon} size={m.navIcon} />
                {label}
              </NavRow>
            ))}
            <NavTail $pl={big ? 37 : 30} $pt={big ? 9 : 6}>
              <Icon name="netDrive" size={14} />
            </NavTail>
          </NavPane>
          <Scroll>
            <Icon name="upChev" size={8} color="#555" />
            <Push />
            <Thumb $h={big ? 24 : 16.5} $mb={big ? 12 : 9} />
            <Icon name="down" size={8} color="#555" />
          </Scroll>
          <FilePane>
            <FileHead>
              <NameHead>名称</NameHead>
              <DateHead>
                修改日期
                <SortMark>
                  <Icon name="down" size={8} />
                </SortMark>
              </DateHead>
            </FileHead>
            {files.map(([icon, name, date]) => (
              <FileRow key={name}>
                <Icon name={icon} size={big ? 16 : 14} />
                <FileName>{name}</FileName>
                <FileDate>{date}</FileDate>
              </FileRow>
            ))}
            <HScroll $h={big ? 19.5 : 14}>
              <Crumb $ml={big ? 6 : 5} />
              <Icon name="leftChev" size={8} color="#555" />
              <HThumb $w={big ? 309 : 268} $ml={big ? 6 : 4} />
              <Icon name="rightChev" size={8} color="#555" />
              <Crumb $ml={big ? 7 : 2} />
            </HScroll>
          </FilePane>
        </Panes>
        <Form>
          <Field>
            <FieldLabel>文件名(N):</FieldLabel>
            <FieldBox $bg="#fff" $line="#a9a9a9">
              bridge_pier.bin
              <Icon name="down" size={8} color="#777" />
            </FieldBox>
          </Field>
          <Field>
            <FieldLabel>保存类型(T):</FieldLabel>
            <FieldBox $bg={big ? "#e1e3e3" : "#cde4f7"} $line={big ? "#b0b4b4" : "#74a9d6"}>
              CloudCompare entities (*.bin)
              <Icon name="down" size={8} color="#777" />
            </FieldBox>
          </Field>
          <Foot $pl={big ? 10 : 8}>
            <FolderToggle $gap={big ? 7 : 5} $pt={big ? 5 : 0}>
              <Icon name="upChev" size={9} color="#333" />
              隐藏文件夹
            </FolderToggle>
            <Push />
            {big && (
              <>
                <PushButton>保存(S)</PushButton>
                <PushButton>取消</PushButton>
              </>
            )}
          </Foot>
        </Form>
        {big && <Grip />}
      </Dialog>
    </ThemeProvider>
  );
};

/* -------------------------------------------------------- format dropdown */

const formats = [
  "CloudCompare entities (*.bin)",
  "ASCII cloud (*.txt *.asc *.neu *.xyz *.pts *.csv)",
  "LAS cloud (*.las *.laz)",
  "LAS 1.3 or 1.4 (*.las *.laz)",
  "E57 cloud (*.e57)",
  "Simple binary file (*.sbf)",
  "PLY mesh (*.ply)",
  "VTK cloud or mesh (*.vtk)",
  "DXF geometry (*.dxf)",
  "Point Cloud Library cloud (*.pcd)",
  "SHP entity (*.shp)",
  "Clouds + sensor info. [meta][ascii] (*.pov)",
  "Point+Normal cloud (*.pn)",
  "Point+Value cloud (*.pv)",
];

const Options = styled.ul<Place>`
  ${placed}
  margin: 0;
  padding: 1px 0 0;
  list-style: none;
  overflow: hidden;
  background: #fff;
  border-right: 2px solid #6b93b8;
  font-size: 12.05px;
`;

const Option = styled.li<{ $on?: boolean }>`
  height: 13.36px;
  line-height: 13px;
  padding-left: 3px;
  white-space: nowrap;
  background: ${(p) => (p.$on ? "#0078d7" : "transparent")};
  color: ${(p) => (p.$on ? "#fff" : "#111")};
`;

/* ---------------------------------------------------------- property grid */

const PropRow = styled.div<{ $h: number; $bg?: string; $color?: string }>`
  display: flex;
  align-items: center;
  height: ${(p) => p.$h}px;
  background: ${(p) => p.$bg ?? "#fff"};
  color: ${(p) => p.$color ?? "#222"};
`;

const PropKey = styled.span<{ $w: number; $pl?: number }>`
  flex: none;
  width: ${(p) => p.$w}px;
  padding-left: ${(p) => p.$pl ?? 1}px;
`;

const PropValue = styled.span`
  display: flex;
  flex: 1;
  align-items: center;
  gap: 3px;
  white-space: pre;
`;

const Grid = styled.div<{ $fs: number; $ls?: number }>`
  flex: 1;
  font-size: ${(p) => p.$fs}px;
  letter-spacing: ${(p) => p.$ls ?? 0}px;
  white-space: nowrap;
`;

const GrayFill = styled.div<Place>`
  ${placed}
  display: flex;
  background: #f0f0f0;
  overflow: hidden;
`;

const PropsPart = styled.div`
  flex: 1;
  margin: 11px 0 0 17px;
  background: #fff;
  border: 1px solid #bfc2c5;
  border-width: 1px 0 0 1px;
`;

const PartialProperties = () => (
  <GrayFill $x={38} $y={686} $w={122} $h={121}>
    <SideBar $w={14} $pt={0} $mt={-3}>
      <Side names={["boxLeft", "boxBack", "boxRight", "boxBottom", "isoFront", "isoFront"]} step={23.1} size={14} />
    </SideBar>
    <PropsPart>
      <Grid $fs={12}>
        <PropRow $h={21}>
          <PropKey $w={61} $pl={4}>Property</PropKey>
          <PropValue>State</PropValue>
        </PropRow>
        <PropRow $h={14} $bg="#a2a2a2" $color="#eee">
          <PropKey $w={61}>CC Object</PropKey>
        </PropRow>
        <PropRow $h={14} $bg="#f6f6f6">
          <PropKey $w={58}>Name</PropKey>
          <PropValue>bridg</PropValue>
        </PropRow>
        <PropRow $h={14.5}>
          <PropKey $w={58}>Visible</PropKey>
          <TickBox size={12} on />
        </PropRow>
        <PropRow $h={14.5} $bg="#f6f6f6">
          <PropKey $w={58}>Show n...</PropKey>
          <TickBox size={12} />
        </PropRow>
        <PropRow $h={16}>
          <PropKey $w={60}>Colors</PropKey>
          <PropValue>
            <Icon name="rgbDots" size={12} />
            RG
          </PropValue>
        </PropRow>
        <PropRow $h={14} $bg="#f6f6f6">
          <PropKey $w={58} />
          <PropValue>X: 3.9</PropValue>
        </PropRow>
      </Grid>
    </PropsPart>
  </GrayFill>
);

/* ---------------------------------------------------------- result window */

const Coords = styled.span`
  line-height: 8.9px;
  white-space: pre;
`;

const ComboValue = styled.span`
  display: flex;
  flex: 1;
  align-items: center;
  gap: 3px;
  height: 100%;
  padding: 0 1px 0 2px;
  background: #e4e4e4;
`;

const Gap = styled.span<{ $w: number }>`
  flex: none;
  width: ${(p) => p.$w}px;
`;

const Pill = styled.span<Place>`
  ${placed}
  border: 1px solid #666;
  border-radius: 3px;
  background: linear-gradient(90deg, #3cb371 38%, #fff 38%);
`;

const Minus = styled.i`
  width: 6px;
  height: 1px;
  background: #aaa;
`;

const Maximize = styled.i`
  width: 5px;
  height: 5px;
  border: 1px solid #aaa;
`;

const Column = styled.div`
  display: flex;
  flex: 1;
  flex-direction: column;
  min-width: 0;
`;

const SideRule = styled.i`
  flex: none;
  height: 1px;
  margin: 0 0 6px;
  background: #c9c9c9;
`;

const ConsoleBox = styled.div`
  display: flex;
  flex: none;
  height: 26px;
  margin: 5px 5px 0 4px;
  background: #fff;
  border: 1px solid #c4c7ca;
`;

const ConsoleLines = styled.div`
  flex: 1;
  font-size: 7px;
  white-space: nowrap;
  color: #222;
`;

const ConsoleText = styled.span<{ $ls: number }>`
  padding-left: 1px;
  letter-spacing: ${(p) => p.$ls}px;
`;

const ConsoleArea = styled.div`
  flex: none;
  height: 49px;
  padding-top: 2px;
  background: #f0f0f0;
`;

const ConsoleTitle = styled.div`
  display: flex;
  align-items: center;
  height: 10.5px;
  padding: 0 2px 0 1px;
  background: #d9d9d9;
  color: #555;
  font: 6.5px ${FIXED};
  letter-spacing: -0.6px;
`;

const ThinScroll = styled.div`
  display: flex;
  flex: none;
  flex-direction: column;
  align-items: center;
  width: 9px;
  padding: 2px 0;
  background: #f0f0f0;
`;

const StatusStrip = styled.div`
  flex: none;
  height: 10px;
  background: #f0f0f0;
`;

const ScanView = styled.div`
  position: relative;
  flex: 1;
  background: #fff;
`;

const AxisMark = styled.i`
  position: absolute;
  right: 3px;
  bottom: 8px;
  width: 7px;
  height: 8px;
  border-left: 1px solid #45cbee;
  border-bottom: 2px solid #f37a7a;
`;

const ResultFlow = styled.div`
  display: flex;
  flex-direction: column;
  height: 100%;
`;

const PropTitle = styled.div`
  margin-top: 7px;
`;

const smallDividers: Record<number, number> = { 3: 3, 4: 3.2, 8: 5, 10: 6 };

const ResultWindow = () => (
  <Item $x={946} $y={471} $w={678} $h={428}>
    <ResultFlow>
      <AppTitle $h={11} $fs={7.2} $color="#8a8a8a">
        <Icon name="logo" size={7} />
        <Squeeze $k={0.92}>{titleText}</Squeeze>
        <Push />
        <Minus />
        <Gap $w={8} />
        <Maximize />
        <Gap $w={9} />
        <Icon name="close" size={6} color="#999" />
        <Gap $w={5} />
      </AppTitle>
      <MenuBar $h={12} $fs={7.2} $color="#8a8a8a">
        <MenuItem $w={6}>
          <Icon name="logo" size={4} />
        </MenuItem>
        {menus.map((m, i) => (
          <MenuItem key={m} $w={[15, 15.5, 20.5, 26, 26, 32, 20][i]}>
            <Squeeze $k={0.92}>{m}</Squeeze>
          </MenuItem>
        ))}
        <Push />
        <Icon name="pin" size={4} />
        <Gap $w={2} />
        <Icon name="close" size={2.5} color="#777" />
        <Gap $w={2} />
      </MenuBar>
      <ToolStrip $h={17.5} $pad={4.5}>
        <Strip cells={toolbarMain.map((c) => (typeof c === "number" ? smallDividers[c] : c))} slot={14.6} size={9.5} />
        <Strip cells={toolbarExtra} slot={14.8} size={9.5} />
      </ToolStrip>
      <Row>
        <SideBar $w={16} $pt={4}>
          <Side names={[...viewTools, ...boxTools]} step={15.3} size={9.5} />
        </SideBar>
        <Column>
          <Row>
            <Dock $w={133}>
              <DockTitle $h={10.5} $fs={6.5} $k={-0.7}>
                DB Tree
                <Icon name="pin" size={5} />
              </DockTitle>
              <Sunken $m="5px 7px 0 4px" $h={143}>
                <TreeRow $h={9} $pl={3} $fs={6.6} $ls={-0.75}>
                  <Icon name="tri" size={4} color="#444" />
                  <TickBox size={8} on />
                  <Icon name="goldFolder" size={6} />
                  <span>bridge_pier.bin (D:/Mengjie⋯</span>
                </TreeRow>
                <TreeRow $h={10} $pl={22} $fs={6.8} $ls={-0.6} $sel="#dcdcdc">
                  <TickBox size={7} on />
                  <Icon name="cloud" size={5} />
                  <span>bridge_pier</span>
                </TreeRow>
              </Sunken>
              <PropTitle>
                <DockTitle $h={10.5} $fs={6.5} $k={-0.6}>
                  Properties
                  <Icon name="pin" size={5} />
                </DockTitle>
              </PropTitle>
              <Sunken $m="5px 7px 0 4px" $h={142}>
                <Row>
                  <Grid $fs={7} $ls={-0.1}>
                    <PropRow $h={13}>
                      <PropKey $w={32} $pl={2}>Property</PropKey>
                      <PropValue>State/Value</PropValue>
                    </PropRow>
                    <PropRow $h={9.5} $bg="#a2a2a2" $color="#eee">
                      <PropKey $w={31}>CC Object</PropKey>
                    </PropRow>
                    <PropRow $h={9.2} $bg="#f4f4f4">
                      <PropKey $w={31}>Name</PropKey>
                      <PropValue>bridge_pier</PropValue>
                    </PropRow>
                    <PropRow $h={9.2}>
                      <PropKey $w={31}>Visible</PropKey>
                      <TickBox size={8} on />
                    </PropRow>
                    <PropRow $h={9.2} $bg="#f4f4f4">
                      <PropKey $w={31}>Show n...</PropKey>
                      <TickBox size={8} />
                    </PropRow>
                    <PropRow $h={11}>
                      <PropKey $w={31}>Colors</PropKey>
                      <ComboValue>
                        <Icon name="rgbDots" size={7} />
                        RGB
                        <Push />
                        <Icon name="tri" size={4} color="#555" />
                      </ComboValue>
                    </PropRow>
                    <PropRow $h={26.7} $bg="#f4f4f4">
                      <PropKey $w={31}>Box di...</PropKey>
                      <Coords>{"X: 3.96092\nY: 1.21236\nZ: 4.08926"}</Coords>
                    </PropRow>
                    <PropRow $h={26.7}>
                      <PropKey $w={31}>Shifted ...</PropKey>
                      <Coords>{"X: 12.0475\nY: 40.8371\nZ: 149.288"}</Coords>
                    </PropRow>
                    <PropRow $h={26.7} $bg="#f4f4f4">
                      <PropKey $w={31}>Global ...</PropKey>
                      <Coords>{"X: 12.047511\nY: 40.837070\nZ: 149.287674"}</Coords>
                    </PropRow>
                  </Grid>
                  <ThinScroll>
                    <Icon name="upChev" size={5} color="#555" />
                    <Thumb $h={64} $mt={3} />
                    <Push />
                    <Icon name="down" size={5} color="#555" />
                  </ThinScroll>
                </Row>
              </Sunken>
            </Dock>
            <ScanView>
              <AxisMark />
            </ScanView>
          </Row>
          <ConsoleArea>
            <ConsoleTitle>
              Console
              <Push />
              <Icon name="pin" size={5} />
              <Gap $w={2} />
              <Icon name="close" size={3} color="#555" />
            </ConsoleTitle>
            <ConsoleBox>
              <ConsoleLines>
                <PropRow $h={10}>
                  <ConsoleText $ls={-0.1}>[18:57:55] [BIN] Version 5.0 (coords: float / scalar: float)</ConsoleText>
                </PropRow>
                <PropRow $h={9} $bg="#f4f4f4">
                  <ConsoleText $ls={-0.235}>
                    [18:57:56] [I/O] File 'D:/MengjieXu/Science/BDSR2019-2020/document_file/网课+证明/point_cloud/点云1/代码中使用的点云文件/bridge_pier.bin' loaded successfully
                  </ConsoleText>
                </PropRow>
              </ConsoleLines>
              <ThinScroll>
                <Icon name="upChev" size={5} color="#555" />
                <Push />
                <Thumb $h={5} />
                <Push />
                <Icon name="down" size={5} color="#555" />
              </ThinScroll>
            </ConsoleBox>
          </ConsoleArea>
        </Column>
        <SideBar $w={16} $pt={4}>
          <Side names={["noEntry", "plate", "plate"]} step={15.3} size={9.5} />
          <SideRule />
          <Side names={pluginTools} step={15.2} size={9.5} />
        </SideBar>
      </Row>
      <StatusStrip />
    </ResultFlow>
  </Item>
);

/* ------------------------------------------------------------------- page */

export default function App() {
  return (
    <>
      <GlobalStyle />
      <Board>
        <SourceWindow />
        <Pier x={554.7} y={242.8} w={220.4} h={258} />
        <Tooltip $x={115} $y={122} $w={26} $h={15}>Save</Tooltip>
        <Frame $x={95} $y={95} $w={34} $h={33} $b={7} />
        <Frame $x={139} $y={143} $w={87} $h={31} $b={6} />
        <Caption $x={320} $y={158.5} $w={340} $h={47} $ls={0.15}>Original file is pcd</Caption>
        <PartialProperties />
        <SaveDialog
          x={38} y={378} w={605} h={308} m={compact} path="代码中使用的点云..."
          files={[
            ["notepad", "bridge_pier.bin", "2020/7/20 18:57"],
            ["notepad", "bridge.bin", "2020/2/19 20:19"],
            ["folder", "cluster", "2020/6/16 11:02"],
            ["folder", "registration", "2020/4/18 21:55"],
          ]}
        />
        <Options $x={160} $y={619} $w={482} $h={188}>
          {formats.map((f, i) => (
            <Option key={f} $on={i === 0}>{f}</Option>
          ))}
        </Options>
        <Frame $x={157} $y={617} $w={299} $h={190} $b={3} />
        <Caption $x={510} $y={661.5} $w={316} $h={97} $ls={-0.3}>{"File formats that\ncan be converted"}</Caption>
        <SaveDialog
          x={940} y={18} w={705} h={429} m={roomy} path="代码中使用的点云文件" big
          files={[
            ["notepad", "bridge.bin", "2020/2/19 20:19"],
            ["folder", "cluster", "2020/6/16 11:02"],
            ["folder", "registration", "2020/4/18 21:55"],
          ]}
        />
        <ChooseBox $x={1041} $y={371} $w={270} $h={65} $ls={-0.2}>Choose bin</ChooseBox>
        <ResultWindow />
        <Pill $x={1579} $y={471} $w={26} $h={5} />
        <Pier x={1269} y={581} w={164} h={186} />
        <Frame $x={973} $y={518} $w={84} $h={25} $b={6} />
        <Caption $x={1111} $y={525} $w={366} $h={47} $ls={-0.1}>The result file is bin</Caption>
        <Speck $x={568} $y={68} $w={2} $h={1} />
        <Speck $x={472} $y={691} $w={1} $h={1} />
        <Overlay width="1732" height="939" viewBox="0 0 1732 939">
          <g fill="#ff3b3b">
            <polygon points="138.700,107.700 167,110 162,117 183,139.500 157,124 152,130" />
            <polygon points="111,138.700 140.300,367.500 143.300,366.700 137.300,383.300 129.700,369.700 133.300,368.500" />
            <polygon points="660,626.500 661.500,625 910,361.500 906,357 927,351 921,372 916,367.500 662,627" />
          </g>
        </Overlay>
      </Board>
    </>
  );
}
